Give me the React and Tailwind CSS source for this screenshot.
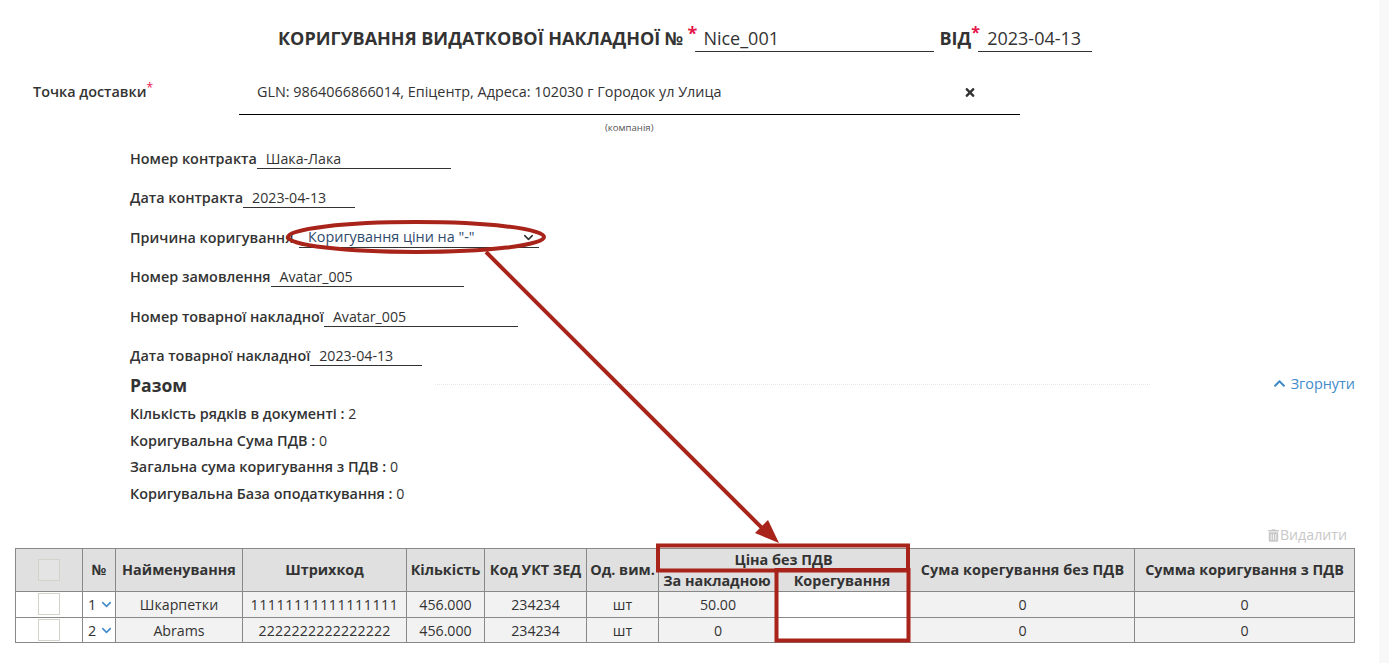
import React from "react";
import { FaChevronUp, FaTimes, FaTrashAlt } from "react-icons/fa";
import { ChevronDown } from "lucide-react";

const Field = ({ label, value, w }) => (
  <div className="h-[39.4px] flex items-start pl-[130px]">
    <span className="font-semibold text-[14.4px] leading-[20px]">{label}</span>
    <span className={`${w} h-[20px] border-b border-[#333] pl-[9px] leading-[20px]`}>{value}</span>
  </div>
);

const Num = ({ n }) => (
  <td className="border border-[#888] bg-white text-left pl-[4px] whitespace-nowrap">
    <span className="inline-flex items-center gap-[3px]">
      <span className="text-[14.4px] leading-[20px] pl-[1px]">{n}</span>
      <ChevronDown className="w-[15px] h-[15px] text-[#428bca]" strokeWidth={2.5} />
    </span>
  </td>
);

const Row = ({ n, name, code, codeClass, price, h, pad }) => (
  <tr className={`${h} ${pad}`}>
    <td className="border border-[#888] bg-white">
      <span className="block mx-auto w-[22px] h-[22px] border border-[#d5d2cc] bg-white" />
    </td>
    <Num n={n} />
    <td className="border border-[#888]">{name}</td>
    <td className={`border border-[#888] ${codeClass}`}>{code}</td>
    <td className="border border-[#888]">456.000</td>
    <td className="border border-[#888]">234234</td>
    <td className="border border-[#888]">шт</td>
    <td className="border border-[#888] pl-[2px]">{price}</td>
    <td className="border border-[#888] bg-white"></td>
    <td className="border border-[#888] pl-[2px]">0</td>
    <td className="border border-[#888]">0</td>
  </tr>
);

export default function App() {
  const th = "border border-[#888] font-bold text-[14.4px] leading-[18px] whitespace-nowrap";
  return (
    <div className="relative w-[1389px] h-[663px] overflow-hidden bg-white text-[#333] text-[14.2px] font-['Open_Sans',sans-serif]">
      <div className="absolute top-0 right-0 bottom-0 w-[10px] bg-[#f8f8f9]" />
      <div className="w-[1379px]">
        <div className="h-[72px] pt-[24px] pl-[278px] flex items-start">
          <span className="font-bold text-[18px] leading-[28px] whitespace-nowrap">КОРИГУВАННЯ ВИДАТКОВОЇ НАКЛАДНОЇ №</span>
          <span className="text-[#e5174a] font-bold text-[18px] leading-[18px] ml-[4px] w-[8px]">*</span>
          <span className="w-[239px] h-[28px] border-b border-[#333] pl-[8px] text-[18px] leading-[28px]">Nice_001</span>
          <span className="font-bold text-[18px] leading-[28px] ml-[5px]">ВІД</span>
          <span className="text-[#e5174a] font-bold text-[16px] leading-[16px] w-[7px]">*</span>
          <span className="w-[114px] h-[28px] border-b border-[#333] pl-[9px] text-[18px] leading-[28px]">2023-04-13</span>
        </div>
        <div className="h-[43px] flex items-start pl-[33px]">
          <span className="w-[206px] pt-[10px] font-semibold text-[14.4px] leading-[20px]">
            Точка доставки<sup className="text-[#e5174a] text-[12px] font-normal top-[-5px]">*</sup>
          </span>
          <div className="w-[781px] h-[43px] border-b border-black flex items-start pt-[10px] pl-[18px] pr-[44px] justify-between">
            <span className="leading-[20px] text-[14.4px]">GLN: 9864066866014, Епіцентр, Адреса: 102030 г Городок ул Улица</span>
            <FaTimes className="w-[12px] h-[13px] mt-[4px]" />
          </div>
        </div>
        <div className="h-[34px] pl-[605px] pt-[5px] text-[9.6px] leading-[16px] text-[#555]">(компанія)</div>
        <div>
          <Field label="Номер контракта" value="Шака-Лака" w="w-[194px]" />
          <Field label="Дата контракта" value="2023-04-13" w="w-[112px]" />
          <div className="h-[39.4px] flex items-start pl-[130px]">
            <span className="font-semibold text-[14.4px] leading-[20px] w-[169px] whitespace-nowrap">Причина коригування</span>
            <span className="w-[240px] h-[20px] border-b border-[#333] pl-[9px] pr-[3px] text-[14.4px] leading-[20px] flex justify-between items-center text-[#2f4a6d]">
              <span>Коригування ціни на "-"</span>
              <ChevronDown className="w-[15px] h-[15px] text-[#333]" strokeWidth={2.5} />
            </span>
          </div>
          <Field label="Номер замовлення" value="Avatar_005" w="w-[193px]" />
          <Field label="Номер товарної накладної" value="Avatar_005" w="w-[194px]" />
          <Field label="Дата товарної накладної" value="2023-04-13" w="w-[112px]" />
        </div>
        <div className="h-[24px] -mt-[11.4px] flex items-start pl-[130px] pr-[24px]">
          <span className="font-bold text-[17.6px] leading-[22px] w-[305px]">Разом</span>
          <div className="w-[715px] mt-[10px] border-t border-dotted border-[#e6e6e6]" />
          <a className="ml-auto flex items-center gap-[5px] text-[#428bca] text-[14.4px] leading-[20px]">
            <FaChevronUp className="w-[13px] h-[13px]" />
            Згорнути
          </a>
        </div>
        <div className="pl-[130px] pt-[3.1px]">
          {[
            "Кількість рядків в документі : ;2",
            "Коригувальна Сума ПДВ : ;0",
            "Загальна сума коригування з ПДВ : ;0",
            "Коригувальна База оподаткування : ;0",
          ].map((s) => {
            const [a, b] = s.split(";");
            return (
              <div key={a} className="h-[26.67px] leading-[26.67px]">
                <span className="font-semibold text-[14.4px]">{a}</span>
                {b}
              </div>
            );
          })}
        </div>
        <div className="h-[40.22px] pt-[17.22px] pr-[32px] flex justify-end items-start text-[#c8c8c8] leading-[20px]">
          <FaTrashAlt className="w-[11px] h-[13px] mt-[4px] mr-[1px]" />
          Видалити
        </div>
        <div className="pl-[15px]">
          <table className="table-fixed border-collapse w-[1339px] text-center bg-[#f2f2f2]">
            <colgroup>
              <col className="w-[67px]" />
              <col className="w-[33px]" />
              <col className="w-[127px]" />
              <col className="w-[164px]" />
              <col className="w-[78px]" />
              <col className="w-[102px]" />
              <col className="w-[72px]" />
              <col className="w-[117px]" />
              <col className="w-[133px]" />
              <col className="w-[226px]" />
              <col className="w-[220px]" />
            </colgroup>
            <thead className="bg-[#e0e0e0]">
              <tr className="h-[23px]">
                <th rowSpan={2} className={th}>
                  <span className="block mx-auto w-[22px] h-[22px] border border-[#d5d2cc] bg-[#e4e4e4]" />
                </th>
                <th rowSpan={2} className={th}>№</th>
                <th rowSpan={2} className={th}>Найменування</th>
                <th rowSpan={2} className={th}>Штрихкод</th>
                <th rowSpan={2} className={th}>Кількість</th>
                <th rowSpan={2} className={th}>Код УКТ ЗЕД</th>
                <th rowSpan={2} className={th}>Од. вим.</th>
                <th colSpan={2} className={th}>Ціна без ПДВ</th>
                <th rowSpan={2} className={`${th} pl-[2px] tracking-[0.05px]`}>Сума корегування без ПДВ</th>
                <th rowSpan={2} className={th}>Сумма коригування з ПДВ</th>
              </tr>
              <tr className="h-[20px]">
                <th className={th}>За накладною</th>
                <th className={th}>Корегування</th>
              </tr>
            </thead>
            <tbody>
              <Row n="1" name="Шкарпетки" code="11111111111111111" codeClass="tracking-[0.6px]" price="50.00" h="h-[26px]" pad="" />
              <Row n="2" name="Abrams" code="2222222222222222" codeClass="tracking-[0.15px]" price="0" h="h-[25px]" pad="[&>td]:pt-[1px]" />
            </tbody>
          </table>
        </div>
      </div>
      <svg className="absolute inset-0 pointer-events-none" width="1389" height="663" viewBox="0 0 1389 663" fill="none">
        <ellipse cx="416" cy="237" rx="128" ry="15" stroke="#a82319" strokeWidth="4" />
        <line x1="486" y1="252" x2="768" y2="534" stroke="#a82319" strokeWidth="4" />
        <polygon points="779,543 755,533 768,520" fill="#a82319" />
        <rect x="658" y="545.5" width="250" height="25" stroke="#a82319" strokeWidth="4" />
        <rect x="776.5" y="570" width="132" height="70.5" stroke="#a82319" strokeWidth="4" />
      </svg>
    </div>
  );
}
